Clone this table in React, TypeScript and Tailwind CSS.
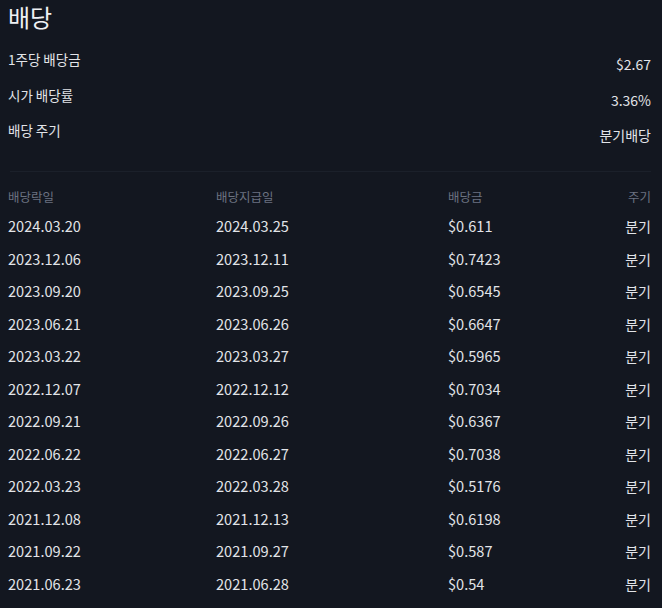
import React from "react";

const rows = [
  ["2024.03.20", "2024.03.25", "$0.611"],
  ["2023.12.06", "2023.12.11", "$0.7423"],
  ["2023.09.20", "2023.09.25", "$0.6545"],
  ["2023.06.21", "2023.06.26", "$0.6647"],
  ["2023.03.22", "2023.03.27", "$0.5965"],
  ["2022.12.07", "2022.12.12", "$0.7034"],
  ["2022.09.21", "2022.09.26", "$0.6367"],
  ["2022.06.22", "2022.06.27", "$0.7038"],
  ["2022.03.23", "2022.03.28", "$0.5176"],
  ["2021.12.08", "2021.12.13", "$0.6198"],
  ["2021.09.22", "2021.09.27", "$0.587"],
  ["2021.06.23", "2021.06.28", "$0.54"],
];

export default function App() {
  return (
    <div
      className="w-[662px] h-[608px] overflow-hidden bg-[#131720] text-[#e2e4e8] pl-[8px] pr-[11px]"
      style={{ fontFamily: '"Noto Sans CJK KR", "Noto Sans", sans-serif' }}
    >
      <h2 className="text-[24px] leading-[36px] font-normal text-[#eef0f3] -mt-[1px]">배당</h2>
      <div className="mt-[11px] flex flex-col">
        <div className="flex justify-between items-center h-[36px] text-[14px]">
          <span className="-mt-[10px] text-[13.5px]">1주당 배당금</span>
          <span>$2.67</span>
        </div>
        <div className="flex justify-between items-center h-[36px] text-[14px]">
          <span className="-mt-[10px] text-[13.5px]">시가 배당률</span>
          <span>3.36%</span>
        </div>
        <div className="flex justify-between items-center h-[34px] text-[14px]">
          <span className="-mt-[10px] text-[13.5px]">배당 주기</span>
          <span>분기배당</span>
        </div>
      </div>
      <div className="mt-[19px] h-px bg-[#1b202a] ml-[2px]" />
      <div className="mt-[10px] grid grid-cols-[208px_232px_1fr_auto] text-[14.6px]">
        <div className="text-[12.5px] text-[#6b7280] h-[28px] leading-[28px] pt-[1px]">배당락일</div>
        <div className="text-[12.5px] text-[#6b7280] h-[28px] leading-[28px] pt-[1px]">배당지급일</div>
        <div className="text-[12.5px] text-[#6b7280] h-[28px] leading-[28px] pt-[1px]">배당금</div>
        <div className="text-[12.5px] text-[#6b7280] h-[28px] leading-[28px] pt-[1px] text-right">주기</div>
        {rows.map((r) => (
          <React.Fragment key={r[0]}>
            <div className="h-[32.5px] leading-[32.5px]">{r[0]}</div>
            <div className="h-[32.5px] leading-[32.5px]">{r[1]}</div>
            <div className="h-[32.5px] leading-[32.5px]">{r[2]}</div>
            <div className="h-[32.5px] leading-[32.5px] text-right text-[14px]">분기</div>
          </React.Fragment>
        ))}
      </div>
    </div>
  );
}
